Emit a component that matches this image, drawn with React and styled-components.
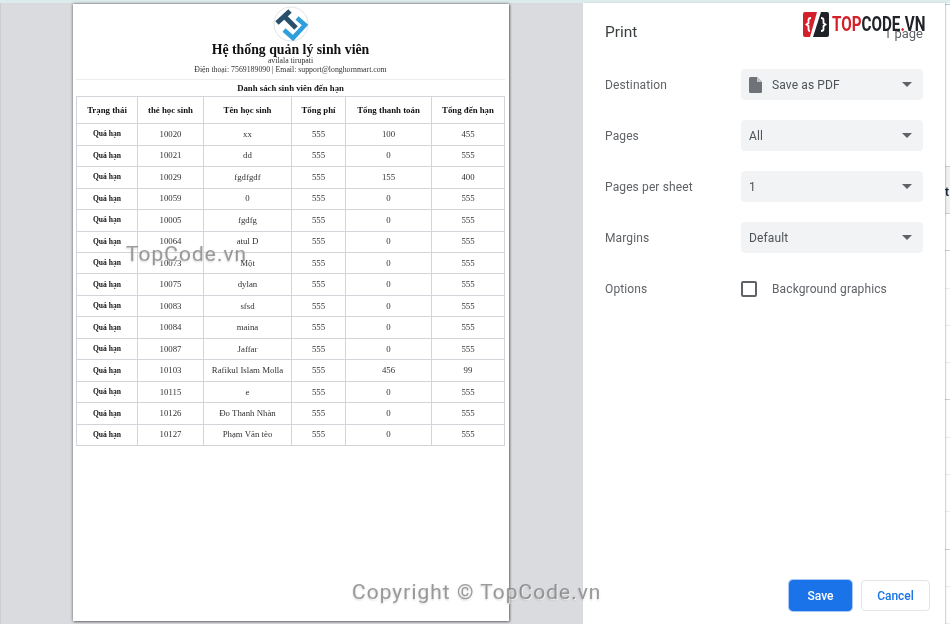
import React from 'react';
import styled, {createGlobalStyle} from 'styled-components';

const GlobalStyle = createGlobalStyle`
html, body {
    margin: 0;
    padding: 0;
    background: #fff;
    overflow: hidden;
}
`;

const Screen = styled.div`
position: relative;
width: 950px;
height: 624px;
overflow: hidden;
display: flex;
flex-direction: column;
font-family: Roboto, "Liberation Sans", sans-serif;
filter: blur(0.4px);
`;

const TopStrip = styled.div`
height: 3px;
background: #dcebec;
flex: none;
`;

const Main = styled.div`
flex: 1;
display: flex;
min-height: 0;
`;

const Preview = styled.div`
width: 583px;
flex: none;
background: #dadbdf;
border-left: 1px solid #cdcdcd;
padding: 1px 0 0 72px;
box-sizing: border-box;
`;

const Paper = styled.div`
width: 436px;
height: 617px;
background: #fff;
box-shadow: 0 0 3px rgba(0, 0, 0, 0.55), 1px 1px 2px rgba(0, 0, 0, 0.3);
padding: 2px 4px 0 3px;
box-sizing: border-box;
font-family: "Liberation Serif", "Times New Roman", serif;
color: #111;
display: flex;
flex-direction: column;
align-items: center;
`;

const TitleBlock = styled.div`
text-align: center;
line-height: 8.6px;
font-size: 7.8px;
color: #333;
width: 100%;
padding-bottom: 5px;
border-bottom: 1px solid #ececef;
`;

const Title = styled.div`
font-size: 13.8px;
font-weight: bold;
line-height: 15px;
color: #111;
`;

const SectionTitle = styled.div`
font-size: 8.75px;
font-weight: bold;
line-height: 16px;
`;

const Table = styled.table`
border-collapse: collapse;
table-layout: fixed;
width: 428px;
`;

const HeadCell = styled.th`
height: 25px;
padding: 0 0 1px;
border: 1px solid #d3d4da;
font-weight: bold;
font-size: 8.8px;
`;

const Cell = styled.td`
height: 19.47px;
padding: 0 0 1px;
border: 1px solid #d3d4da;
text-align: center;
color: ${props => (props.$strong ? '#111' : '#333')};
font-weight: ${props => (props.$strong ? 'bold' : 'normal')};
font-size: ${props => (props.$strong ? '7.6px' : '8.8px')};
`;

const Panel = styled.div`
width: 362px;
flex: none;
background: #fff;
padding: 0 22px 0 22px;
box-sizing: border-box;
display: flex;
flex-direction: column;
color: #5f6368;
box-shadow: 1px 0 1px rgba(0, 0, 0, 0.16);
position: relative;
`;

const PanelHeader = styled.div`
display: flex;
justify-content: space-between;
align-items: center;
height: 30px;
margin-top: 14px;
margin-bottom: 22px;
`;

const PanelTitle = styled.div`
font-size: 15.5px;
color: #3c4043;
`;

const PageCount = styled.div`
font-size: 13px;
color: #5f6368;
margin-top: 2px;
`;

const Row = styled.div`
display: flex;
align-items: center;
height: 31px;
margin-bottom: 20px;
font-size: 12px;
letter-spacing: 0.12px;
`;

const Label = styled.div`
width: 136px;
flex: none;
`;

const Select = styled.div`
width: 182px;
height: 31px;
flex: none;
border-radius: 4px;
background: #f1f3f4;
display: flex;
align-items: center;
padding: 0 11px 0 8px;
box-sizing: border-box;
color: #4f5357;
`;

const SelectText = styled.span`
flex: 1;
`;

const Arrow = styled.span`
width: 0;
height: 0;
border-left: 5.5px solid transparent;
border-right: 5.5px solid transparent;
border-top: 5.5px solid #5f6368;
`;

const FileIcon = styled.svg`
width: 13px;
height: 16px;
margin-right: 10px;
flex: none;
`;

const Checkbox = styled.span`
width: 12px;
height: 12px;
border: 2px solid #5f6368;
border-radius: 2px;
margin-right: 15px;
flex: none;
`;

const Spacer = styled.div`
flex: 1;
`;

const Footer = styled.div`
display: flex;
justify-content: flex-end;
gap: 9px;
margin-right: -7px;
margin-bottom: 13px;
align-items: center;
`;

const Button = styled.div`
height: 29px;
width: ${props => (props.$primary ? '61px' : '67px')};
border-radius: 4px;
display: flex;
align-items: center;
justify-content: center;
font-size: 12px;
font-weight: 500;
background: ${props => (props.$primary ? '#1a73e8' : '#fff')};
color: ${props => (props.$primary ? '#fff' : '#1a73e8')};
border: 1px solid ${props => (props.$primary ? '#1a73e8' : '#e2e4e8')};
box-shadow: ${props => (props.$primary ? '0 0 0 1px #a9c9f5' : 'none')};
`;

const RightEdge = styled.div`
flex: 1;
background: #fefefe;
display: flex;
flex-direction: column;
padding-top: 1px;
`;

const EdgeHead = styled.div`
height: 162px;
flex: none;
border-top: 1px solid #b9cccc;
box-sizing: border-box;
`;

const EdgeBand = styled.div`
height: 48px;
flex: none;
background: #eef0f2;
border-top: 1px solid #cfcfcf;
border-bottom: 1px solid #cfcfcf;
font: bold 12px "Liberation Sans", sans-serif;
color: #1a2a3a;
padding-top: 18px;
box-sizing: border-box;
overflow: hidden;
`;

const EdgeRow = styled.div`
height: 37.3px;
flex: none;
border-bottom: 1px solid ${props => (props.$dark ? '#cfcfcf' : '#ececec')};
box-sizing: border-box;
`;

const Brand = styled.div`
position: absolute;
left: 803px;
top: 12px;
display: flex;
align-items: center;
`;

const BrandText = styled.div`
font: bold 19.5px Roboto, sans-serif;
line-height: 22px;
color: #20222a;
transform: scaleX(0.78);
transform-origin: left center;
margin-left: 3px;
white-space: nowrap;
`;

const Red = styled.span`
color: #d3202a;
`;

const Watermark = styled.div`
position: absolute;
left: ${props => props.$left}px;
top: ${props => props.$top}px;
font: 21px Roboto, sans-serif;
letter-spacing: 1px;
color: rgba(120, 120, 120, 0.7);
text-shadow: 1px 1px 1px rgba(255, 255, 255, 0.8), 0 1px 2px rgba(0, 0, 0, 0.25);
white-space: nowrap;
`;

const Logo = () => (
    <svg width="36" height="36" viewBox="0 0 36 36">
        <circle cx="18" cy="18" r="17" fill="#fff" stroke="#dfe3e6" strokeWidth="1" />
        <path d="M4 17 L17 5" stroke="#28506a" strokeWidth="5" fill="none" />
        <path d="M11 10 L23 22" stroke="#28506a" strokeWidth="5" fill="none" />
        <path d="M11 24 L20 32 L32 19 L24 12" stroke="#2f9fdc" strokeWidth="4.5" fill="none" />
    </svg>
);

const BrandMark = () => (
    <svg width="26" height="25" viewBox="0 0 26 25">
        <path d="M2 0 H14 L7 25 H2 Q0 25 0 23 V2 Q0 0 2 0 Z" fill="#d3202a" />
        <path d="M18 0 H24 Q26 0 26 2 V23 Q26 25 24 25 H10 Z" fill="#20222a" />
        <path d="M8 6 Q5.5 6 5.5 8 V11 L3.5 12.5 L5.5 14 V17 Q5.5 19 7 19" stroke="#fff" strokeWidth="1.8" fill="none" />
        <path d="M18 6 Q20.5 6 20.5 8 V11 L22.5 12.5 L20.5 14 V17 Q20.5 19 18 19" stroke="#fff" strokeWidth="1.8" fill="none" />
    </svg>
);

const columns = [61, 66, 88, 54, 86, 73];
const headers = ['Trạng thái', 'thẻ học sinh', 'Tên học sinh', 'Tổng phí', 'Tổng thanh toán', 'Tổng đến hạn'];
const students = [
    ['10020', 'xx', '555', '100', '455'],
    ['10021', 'dd', '555', '0', '555'],
    ['10029', 'fgdfgdf', '555', '155', '400'],
    ['10059', '0', '555', '0', '555'],
    ['10005', 'fgdfg', '555', '0', '555'],
    ['10064', 'atul D', '555', '0', '555'],
    ['10073', 'Một', '555', '0', '555'],
    ['10075', 'dylan', '555', '0', '555'],
    ['10083', 'sfsd', '555', '0', '555'],
    ['10084', 'maina', '555', '0', '555'],
    ['10087', 'Jaffar', '555', '0', '555'],
    ['10103', 'Rafikul Islam Molla', '555', '456', '99'],
    ['10115', 'e', '555', '0', '555'],
    ['10126', 'Đo Thanh Nhàn', '555', '0', '555'],
    ['10127', 'Phạm Văn tèo', '555', '0', '555'],
];
const edgeRows = [true, false, false, false, true, false, false, false, true, false, false];

const SelectRow = ({label, value, icon}) => (
    <Row>
        <Label>{label}</Label>
        <Select>
            {icon && (
                <FileIcon viewBox="0 0 13 16">
                    <path d="M1.5 0 H8 L13 5 V14.5 Q13 16 11.5 16 H1.5 Q0 16 0 14.5 V1.5 Q0 0 1.5 0 Z" fill="#6f7276" />
                    <path d="M8 0 V5 H13 Z" fill="#c4c6c9" />
                </FileIcon>
            )}
            <SelectText>{value}</SelectText>
            <Arrow />
        </Select>
    </Row>
);

export default function App() {
    return (
        <Screen>
            <GlobalStyle />
            <TopStrip />
            <Main>
                <Preview>
                    <Paper>
                        <Logo />
                        <TitleBlock>
                            <Title>Hệ thống quản lý sinh viên</Title>
                            <div>avilala tirupati</div>
                            <div>Điện thoại: 7569189090 | Email: support@longhornmart.com</div>
                        </TitleBlock>
                        <SectionTitle>Danh sách sinh viên đến hạn</SectionTitle>
                        <Table>
                            <colgroup>
                                {columns.map((width, i) => <col key={i} style={{width}} />)}
                            </colgroup>
                            <thead>
                                <tr>
                                    {headers.map(h => <HeadCell key={h}>{h}</HeadCell>)}
                                </tr>
                            </thead>
                            <tbody>
                                {students.map(row => (
                                    <tr key={row[0]}>
                                        <Cell $strong>Quá hạn</Cell>
                                        {row.map((value, i) => <Cell key={i}>{value}</Cell>)}
                                    </tr>
                                ))}
                            </tbody>
                        </Table>
                    </Paper>
                </Preview>
                <Panel>
                    <PanelHeader>
                        <PanelTitle>Print</PanelTitle>
                        <PageCount>1 page</PageCount>
                    </PanelHeader>
                    <SelectRow label="Destination" value="Save as PDF" icon />
                    <SelectRow label="Pages" value="All" />
                    <SelectRow label="Pages per sheet" value="1" />
                    <SelectRow label="Margins" value="Default" />
                    <Row>
                        <Label>Options</Label>
                        <Checkbox />
                        <span>Background graphics</span>
                    </Row>
                    <Spacer />
                    <Footer>
                        <Button $primary>Save</Button>
                        <Button>Cancel</Button>
                    </Footer>
                </Panel>
                <RightEdge>
                    <EdgeHead />
                    <EdgeBand>t</EdgeBand>
                    {edgeRows.map((dark, i) => <EdgeRow key={i} $dark={dark} />)}
                </RightEdge>
            </Main>
            <Brand>
                <BrandMark />
                <BrandText><Red>TOP</Red>CODE<Red>.</Red>VN</BrandText>
            </Brand>
            <Watermark $left={126} $top={242}>TopCode.vn</Watermark>
            <Watermark $left={352} $top={580}>Copyright © TopCode.vn</Watermark>
        </Screen>
    );
}
